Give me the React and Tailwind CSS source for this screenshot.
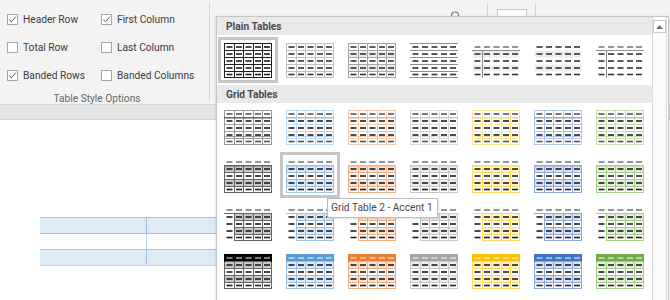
import React from "react";

const XS = [0.5, 10.5, 19.5, 29.5, 38.5, 47.5];
const YS = [0.5, 7.5, 14.5, 21.5, 28.5, 34.5];

const COLORS = {
  k: { a: "#000000", t60: "#666666", t40: "#999999", t20: "#c8c8c8" },
  b: { a: "#5b9bd5", t60: "#9cc2e5", t40: "#bdd7ee", t20: "#deeaf6" },
  o: { a: "#ed7d31", t60: "#f4b083", t40: "#f7caac", t20: "#fbe4d5" },
  g: { a: "#a5a5a5", t60: "#c9c9c9", t40: "#dbdbdb", t20: "#ededed" },
  y: { a: "#ffc000", t60: "#ffd966", t40: "#ffe599", t20: "#fff2cc" },
  d: { a: "#4472c4", t60: "#8eaadb", t40: "#b4c6e7", t20: "#d9e2f3" },
  n: { a: "#70ad47", t60: "#a8d08d", t40: "#c5e0b3", t20: "#e2efd9" },
};
const ORDER = ["k", "b", "o", "g", "y", "d", "n"];

// builds the little table preview for one style
function build(v, c) {
  const fills = [];
  const lines = [];
  let dash = () => "#1f1f1f";
  const band = (r, fill, c1 = 0, c2 = 4) =>
    fills.push({ x: XS[c1], y: YS[r], w: XS[c2 + 1] - XS[c1], h: YS[r + 1] - YS[r], fill });
  const hl = (r, s, c1 = 0, c2 = 4, w = 1, dy = 0) =>
    lines.push({ x1: XS[c1] - 0.5, y1: YS[r] + dy, x2: XS[c2 + 1] + 0.5, y2: YS[r] + dy, s, w });
  const vl = (i, s, r1 = 0, r2 = 4) =>
    lines.push({ x1: XS[i], y1: YS[r1] - 0.5, x2: XS[i], y2: YS[r2 + 1] + 0.5, s, w: 1 });
  const grid = (s) => {
    for (let r = 0; r < 6; r++) hl(r, s);
    for (let i = 0; i < 6; i++) vl(i, s);
  };

  switch (v) {
    case "tg":
      grid("#1f1f1f");
      break;
    case "tgl":
      grid("#c0c0c0");
      dash = () => "#333333";
      break;
    case "pt1":
      band(1, "#ededed");
      band(3, "#ededed");
      grid("#a6a6a6");
      dash = () => "#333333";
      break;
    case "pt2":
      for (let r = 0; r < 6; r++) hl(r, "#8c8c8c");
      dash = () => "#333333";
      break;
    case "pt3":
      band(1, "#efefef");
      band(3, "#efefef");
      hl(1, "#8c8c8c");
      vl(1, "#8c8c8c", 1, 4);
      dash = (i, j) => (j === 0 ? "#7a7a7a" : "#333333");
      break;
    case "pt4":
      band(1, "#ededed");
      band(3, "#ededed");
      dash = () => "#333333";
      break;
    case "pt5":
      hl(1, "#8c8c8c");
      vl(1, "#8c8c8c", 1, 4);
      dash = (i, j) => (j === 0 ? "#7a7a7a" : "#333333");
      break;
    case "g1":
      grid(c.t40);
      hl(1, c.t60, 0, 4, 1.5, 0.25);
      hl(4, c.t40, 0, 4, 1, -2);
      dash = (i, j) => (j === 0 || j === 4 ? "#555555" : "#1f1f1f");
      break;
    case "g2":
      band(1, c.t20);
      band(3, c.t20);
      for (let r = 2; r < 6; r++) hl(r, c.t60);
      for (let i = 0; i < 6; i++) vl(i, c.t60, 1, 4);
      hl(1, c.t60, 0, 4, 1.5, 0.25);
      dash = (i, j) => (j === 0 ? "#7a7a7a" : "#1f1f1f");
      break;
    case "g3":
      band(1, c.t20, 1, 4);
      band(3, c.t20, 1, 4);
      for (let r = 2; r < 6; r++) hl(r, c.t60, 1, 4);
      for (let i = 1; i < 6; i++) vl(i, c.t60, 1, 4);
      hl(1, c.t60);
      dash = (i, j) => (j === 0 ? "#7a7a7a" : "#1f1f1f");
      break;
    case "g4":
      band(0, c.a);
      band(1, c.t20);
      band(3, c.t20);
      for (let r = 1; r < 6; r++) hl(r, c.t60);
      for (let i = 0; i < 6; i++) vl(i, c.t60, 1, 4);
      hl(0, c.a);
      vl(0, c.a, 0, 0);
      vl(5, c.a, 0, 0);
      dash = (i, j) => (j === 0 ? "rgba(255,255,255,0.6)" : "#1f1f1f");
      break;
    default:
      break;
  }
  return { fills, lines, dash };
}

function Thumb({ v, c }) {
  const { fills, lines, dash } = build(v, c);
  const dashes = [];
  for (let j = 0; j < 5; j++) {
    for (let i = 0; i < 5; i++) {
      const cx = (XS[i] + XS[i + 1]) / 2;
      const cy = (YS[j] + YS[j + 1]) / 2;
      dashes.push(
        <rect key={`${i}-${j}`} x={cx - 3} y={cy - 0.8} width="6" height="1.6" fill={dash(i, j)} />
      );
    }
  }
  return (
    <svg width="48" height="35" viewBox="0 0 48 35">
      {fills.map((f, i) => (
        <rect key={i} x={f.x} y={f.y} width={f.w} height={f.h} fill={f.fill} />
      ))}
      {lines.map((l, i) => (
        <line key={i} x1={l.x1} y1={l.y1} x2={l.x2} y2={l.y2} stroke={l.s} strokeWidth={l.w} />
      ))}
      {dashes}
    </svg>
  );
}

const Cell = ({ v, c, sel, tall }) => (
  <div className={tall ? "w-[62px] h-[50px] flex items-center justify-center" : "w-[62px] h-[48px] flex items-center justify-center"}>
    <div
      className={
        sel
          ? "w-[60px] h-[46px] border-[3px] border-[#c6c6c6] flex items-center justify-center"
          : "w-[60px] h-[46px] border-[3px] border-transparent flex items-center justify-center"
      }
    >
      <Thumb v={v} c={c} />
    </div>
  </div>
);

const Check = ({ on, label }) => (
  <div className="flex items-center h-[11px] gap-[5px]">
    <span className="w-[11px] h-[11px] border border-[#a6a6a6] bg-white flex items-center justify-center shrink-0">
      {on && (
        <svg width="9" height="9" viewBox="0 0 9 9">
          <path d="M1.3 4.6 L3.5 6.9 L7.7 1.7" fill="none" stroke="#5a5a5a" strokeWidth="1" />
        </svg>
      )}
    </span>
    <span className="whitespace-nowrap leading-none pt-[1px]">{label}</span>
  </div>
);

const Header = ({ children }) => (
  <div className="h-[18px] bg-[#e9e9e9] pl-[9px] pt-[1px] flex items-center font-bold text-[#4d4d4d]">{children}</div>
);

export default function App() {
  const plain = ["tg", "tgl", "pt1", "pt2", "pt3", "pt4", "pt5"];
  const gridRows = ["g1", "g2", "g3", "g4"];

  return (
    <div className="relative w-[670px] h-[300px] overflow-hidden bg-white font-['Roboto',sans-serif] text-[10.2px] text-[#3c3c3c]">
      {/* ribbon */}
      <div className="h-[105px] bg-[#f3f3f3] border-b border-[#d9d9d9] flex">
        <div className="w-[209px] pl-[7px] pt-[14px]">
          <div className="grid grid-cols-[94px_auto] gap-y-[17px]">
            <Check on label="Header Row" />
            <Check on label="First Column" />
            <Check label="Total Row" />
            <Check label="Last Column" />
            <Check on label="Banded Rows" />
            <Check label="Banded Columns" />
          </div>
          <div className="w-[180px] mt-[11px] h-[14px] leading-[14px] text-center text-[#666666]">Table Style Options</div>
        </div>
        <div className="w-px bg-[#d6d6d6] my-[3px]" />
        <div className="flex items-start pl-[240px]">
          <svg width="10" height="10" viewBox="0 0 10 10" className="mt-[10px]">
            <circle cx="5" cy="5.5" r="3.5" fill="none" stroke="#7a7a7a" strokeWidth="1.2" />
          </svg>
          <div className="w-px h-[60px] bg-[#d6d6d6] mt-[3px] ml-[27px]" />
          <div className="w-[30px] h-[20px] border border-[#c6c6c6] bg-white mt-[9px] ml-[9px]" />
          <div className="w-px h-[60px] bg-[#d6d6d6] mt-[3px] ml-[8px]" />
        </div>
      </div>
      <div className="h-[15px] bg-[#e6e6e6] border-b border-[#d4d4d4]" />

      {/* document page */}
      <div className="pl-[40px] pt-[97px]">
        <div className="w-[260px]">
          <div className="flex h-[17px] bg-[#deeaf6] border-t border-b border-[#9cc2e5]">
            <div className="w-[107px] border-r border-[#9cc2e5]" />
          </div>
          <div className="flex h-[16px] bg-white border-b border-[#9cc2e5]">
            <div className="w-[107px] border-r border-[#bdd7ee]" />
          </div>
          <div className="flex h-[16px] bg-[#deeaf6] border-b border-[#bdd7ee]">
            <div className="w-[107px] border-r border-[#9cc2e5]" />
          </div>
        </div>
      </div>

      {/* styles gallery dropdown */}
      <div className="absolute left-[216px] top-[16px] w-[453px] h-[290px] bg-white border border-[#c6c6c6] shadow-[0_1px_3px_rgba(0,0,0,0.18)] flex">
        <div className="w-[435px]">
          <Header>Plain Tables</Header>
          <div className="flex">
            {plain.map((v, i) => (
              <Cell key={v} v={v} sel={i === 0} tall />
            ))}
          </div>
          <Header>Grid Tables</Header>
          {gridRows.map((g, r) => (
            <div key={g} className="flex">
              {ORDER.map((k, i) => (
                <Cell key={k} v={g} c={COLORS[k]} sel={r === 1 && i === 1} />
              ))}
            </div>
          ))}
        </div>
        <div className="w-[15px] border-l border-r border-[#dadada] bg-[#fbfbfb] pt-[3px]">
          <div className="h-[13px] border border-[#c6c6c6] bg-white flex items-center justify-center">
            <svg width="7" height="4" viewBox="0 0 7 4">
              <path d="M0 4 L3.5 0 L7 4 Z" fill="#707070" />
            </svg>
          </div>
        </div>
      </div>

      {/* tooltip */}
      <div className="absolute left-[327px] top-[198px] w-[111px] h-[20px] bg-white border border-[#bcbcbc] shadow-[1px_1px_2px_rgba(0,0,0,0.12)] pl-[3px] flex items-center text-[#4a4a4a] whitespace-nowrap">
        Grid Table 2 - Accent 1
      </div>
    </div>
  );
}
